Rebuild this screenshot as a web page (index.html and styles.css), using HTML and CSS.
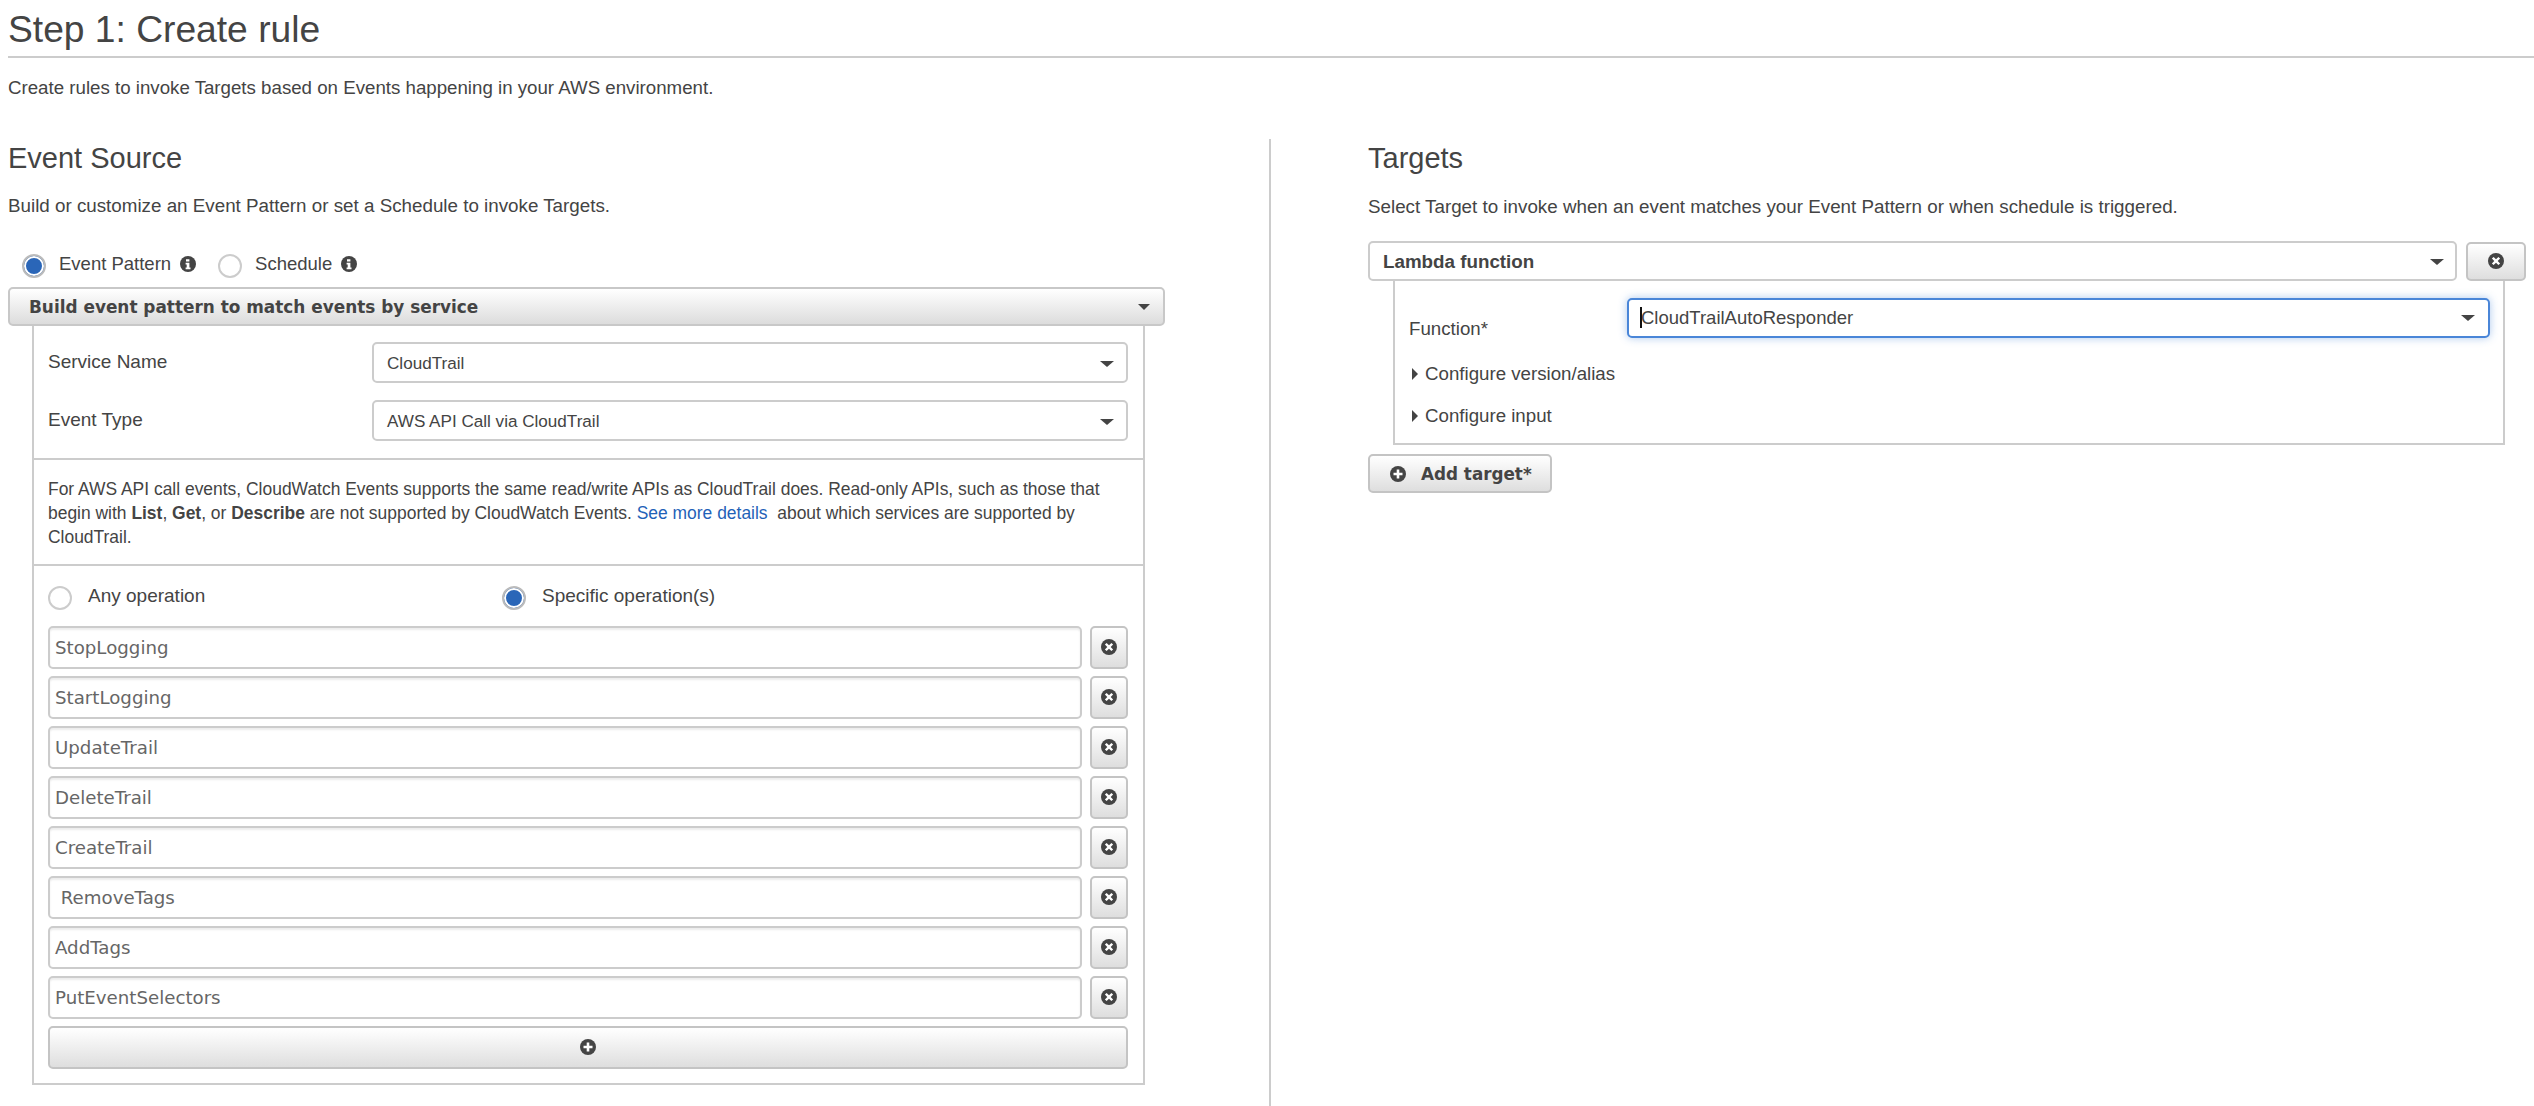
FILE: index.html
```html
<!DOCTYPE html>
<html lang="en">
<head>
    <meta charset="UTF-8">
    <title>Step 1: Create rule</title>
    <link rel="stylesheet" href="styles.css">
</head>
<body>
<svg class="icon-defs" width="0" height="0">
    <symbol id="i-info" viewBox="0 0 16 16">
        <circle cx="8" cy="8" r="8" fill="#444"/>
        <path d="M6 3.2h3.4v2.4H6zM5.6 6.7h3.8v4.9h1.1v1.7H5.6v-1.7h1.1V8.4H5.6z" fill="#fff"/>
    </symbol>
    <symbol id="i-close" viewBox="0 0 16 16">
        <circle cx="8" cy="8" r="8" fill="#444"/>
        <path d="M5.6 3.9L8 6.3l2.4-2.4 1.7 1.7L9.7 8l2.4 2.4-1.7 1.7L8 9.7l-2.4 2.4-1.7-1.7L6.3 8 3.9 5.6z" fill="#fff"/>
    </symbol>
    <symbol id="i-plus" viewBox="0 0 16 16">
        <circle cx="8" cy="8" r="8" fill="#444"/>
        <path d="M6.7 3.5h2.6v3.2h3.2v2.6H9.3v3.2H6.7V9.3H3.5V6.7h3.2z" fill="#fff"/>
    </symbol>
</svg>

<header class="page-head">
    <h1>Step 1: Create rule</h1>
</header>
<p class="intro">Create rules to invoke Targets based on Events happening in your AWS environment.</p>

<main class="columns">
    <section class="col-source">
        <h2>Event Source</h2>
        <p class="lead">Build or customize an Event Pattern or set a Schedule to invoke Targets.</p>

        <div class="mode-row">
            <span class="radio on"></span>
            <span class="mode-label">Event Pattern</span>
            <svg class="icon-info"><use href="#i-info"/></svg>
            <span class="radio second"></span>
            <span class="mode-label">Schedule</span>
            <svg class="icon-info"><use href="#i-info"/></svg>
        </div>

        <div class="bar-select">
            <span>Build event pattern to match events by service</span>
            <i class="caret"></i>
        </div>

        <div class="pattern-panel">
            <div class="service-fields">
                <div class="field-row">
                    <label>Service Name</label>
                    <div class="select"><span>CloudTrail</span><i class="caret"></i></div>
                </div>
                <div class="field-row">
                    <label>Event Type</label>
                    <div class="select"><span>AWS API Call via CloudTrail</span><i class="caret"></i></div>
                </div>
            </div>

            <div class="note">
                For AWS API call events, CloudWatch Events supports the same read/write APIs as CloudTrail does. Read-only APIs, such as those that<br>
                begin with <b>List</b>, <b>Get</b>, or <b>Describe</b> are not supported by CloudWatch Events. <a href="#">See more details</a>&nbsp; about which services are supported by<br>
                CloudTrail.
            </div>

            <div class="operations">
                <div class="op-choice">
                    <div class="op-item"><span class="radio"></span><span>Any operation</span></div>
                    <div class="op-item"><span class="radio on"></span><span>Specific operation(s)</span></div>
                </div>
                <div class="op-row"><div class="op-input">StopLogging</div><button class="icon-btn"><svg class="icon-16"><use href="#i-close"/></svg></button></div>
                <div class="op-row"><div class="op-input">StartLogging</div><button class="icon-btn"><svg class="icon-16"><use href="#i-close"/></svg></button></div>
                <div class="op-row"><div class="op-input">UpdateTrail</div><button class="icon-btn"><svg class="icon-16"><use href="#i-close"/></svg></button></div>
                <div class="op-row"><div class="op-input">DeleteTrail</div><button class="icon-btn"><svg class="icon-16"><use href="#i-close"/></svg></button></div>
                <div class="op-row"><div class="op-input">CreateTrail</div><button class="icon-btn"><svg class="icon-16"><use href="#i-close"/></svg></button></div>
                <div class="op-row"><div class="op-input">&nbsp;RemoveTags</div><button class="icon-btn"><svg class="icon-16"><use href="#i-close"/></svg></button></div>
                <div class="op-row"><div class="op-input">AddTags</div><button class="icon-btn"><svg class="icon-16"><use href="#i-close"/></svg></button></div>
                <div class="op-row"><div class="op-input">PutEventSelectors</div><button class="icon-btn"><svg class="icon-16"><use href="#i-close"/></svg></button></div>
                <button class="add-op"><svg class="icon-16"><use href="#i-plus"/></svg></button>
            </div>
        </div>
    </section>

    <section class="col-targets">
        <h2>Targets</h2>
        <p class="lead">Select Target to invoke when an event matches your Event Pattern or when schedule is triggered.</p>

        <div class="target-head">
            <div class="select target-select"><b>Lambda function</b><i class="caret"></i></div>
            <button class="icon-btn target-remove"><svg class="icon-16"><use href="#i-close"/></svg></button>
        </div>

        <div class="target-panel">
            <div class="function-row">
                <label>Function*</label>
                <div class="select focused"><span class="text-caret"></span><span>CloudTrailAutoResponder</span><i class="caret"></i></div>
            </div>
            <div class="expander first"><i class="caret-right"></i>Configure version/alias</div>
            <div class="expander"><i class="caret-right"></i>Configure input</div>
        </div>

        <button class="add-target"><svg class="icon-16"><use href="#i-plus"/></svg><span>Add target*</span></button>
    </section>
</main>
</body>
</html>
```

FILE: styles.css
```css
* {
    box-sizing: border-box;
}

html, body {
    height: 100%;
}

body {
    margin: 0;
    padding: 0 8px;
    font-family: "Liberation Sans", Arial, sans-serif;
    font-size: 18.7px;
    color: #444;
    background: #fff;
    overflow: hidden;
}

.icon-defs {
    position: absolute;
}

.page-head {
    height: 58px;
    margin-right: -8px;
    border-bottom: 2px solid #ccc;
}

h1 {
    margin: 0;
    padding-top: 8px;
    font-size: 37.2px;
    font-weight: 400;
    line-height: 42px;
}

.intro {
    margin: 0;
    padding-top: 18px;
    line-height: 24px;
}

.columns {
    display: flex;
    margin-top: 39px;
}

h2 {
    margin: 0;
    font-size: 29px;
    font-weight: 400;
    line-height: 34px;
}

.lead {
    margin: 0;
    padding-top: 19px;
    font-size: 18.8px;
    line-height: 24px;
}

.col-source {
    width: 1261px;
    flex: none;
    padding-top: 2px;
}

.col-targets {
    flex: 1;
    padding: 2px 9px 0 97px;
    border-left: 2px solid #ccc;
    height: 1000px;
}

.col-targets .lead {
    padding-top: 20px;
}

.mode-row {
    display: flex;
    align-items: center;
    height: 24px;
    margin-top: 36px;
    padding-left: 14px;
    font-size: 18.5px;
}

.radio {
    display: inline-block;
    flex: none;
    width: 24px;
    height: 24px;
    border: 2px solid #ccc;
    border-radius: 50%;
    background: #fff;
}

.radio.on {
    border-color: #bbb;
    box-shadow: inset 0 0 0 2px #fff;
    background: #2a66b8;
}

.mode-label {
    margin-left: 13px;
    margin-top: -4px;
}

.icon-info {
    width: 16px;
    height: 16px;
    margin-left: 9px;
    margin-top: -4px;
}

.radio.second {
    margin-left: 22px;
}

.caret {
    width: 0;
    height: 0;
    flex: none;
    border-left: 7px solid transparent;
    border-right: 7px solid transparent;
    border-top: 6px solid #444;
}

.bar-select {
    display: flex;
    align-items: center;
    justify-content: space-between;
    width: 1157px;
    height: 39px;
    margin-top: 9px;
    padding: 0 13px 0 19px;
    font-family: "DejaVu Sans", Verdana, sans-serif;
    font-size: 16.9px;
    font-weight: 700;
    border: 2px solid #c8c8c8;
    border-radius: 5px;
    background: linear-gradient(#fff, #dcdcdc);
}

.bar-select .caret {
    border-left-width: 6px;
    border-right-width: 6px;
}

.pattern-panel {
    width: 1113px;
    margin-left: 24px;
    border: 2px solid #ccc;
    border-top: 0;
}

.service-fields {
    height: 134px;
    padding: 16px 15px 0 14px;
    border-bottom: 2px solid #ccc;
    font-size: 19px;
}

.field-row {
    display: flex;
    height: 41px;
    margin-bottom: 17px;
}

.field-row label {
    width: 324px;
    flex: none;
    line-height: 39px;
}

.select {
    display: flex;
    align-items: center;
    justify-content: space-between;
    flex: 1;
    padding: 2px 12px 0 13px;
    font-size: 17.1px;
    border: 2px solid #ccc;
    border-radius: 5px;
    background: #fff;
}

.note {
    height: 106px;
    padding: 17px 14px 0;
    font-size: 17.45px;
    line-height: 24px;
    border-bottom: 2px solid #ccc;
}

.note a {
    color: #1f62b8;
    text-decoration: none;
}

.operations {
    padding: 20px 15px 14px 14px;
    font-size: 19px;
}

.op-choice {
    display: flex;
    height: 40px;
}

.op-item {
    display: flex;
    gap: 16px;
    width: 454px;
}

.op-item span:last-child {
    margin-top: -2px;
    line-height: 24px;
}

.op-row {
    display: flex;
    gap: 8px;
    height: 43px;
    margin-bottom: 7px;
}

.op-input {
    flex: 1;
    padding-left: 5px;
    font-family: "DejaVu Sans", Verdana, sans-serif;
    font-size: 18.2px;
    line-height: 39px;
    color: #666;
    border: 2px solid #ccc;
    border-radius: 5px;
    background: #fff;
    box-shadow: inset 0 2px 2px rgba(0, 0, 0, 0.08);
}

button {
    padding: 0;
    border: 2px solid #c4c4c4;
    border-radius: 5px;
    background: linear-gradient(#fff, #dedede);
    color: #444;
}

.icon-btn {
    display: flex;
    align-items: center;
    justify-content: center;
    width: 38px;
    flex: none;
    padding-bottom: 2px;
}

.icon-16 {
    display: block;
    width: 16px;
    height: 16px;
    flex: none;
}

.add-op {
    display: flex;
    align-items: center;
    justify-content: center;
    width: 100%;
    height: 43px;
    padding-bottom: 2px;
}

.target-head {
    display: flex;
    height: 40px;
    margin-top: 22px;
}

.target-select {
    flex: none;
    width: 1089px;
    padding-right: 11px;
}

.target-select b {
    font-size: 18.8px;
}

.target-remove {
    width: 60px;
    height: 39px;
    margin-top: 1px;
    margin-left: 9px;
}

.target-panel {
    height: 164px;
    width: 1112px;
    margin-left: 25px;
    padding: 17px 13px 0 14px;
    border: 2px solid #ccc;
    border-top: 0;
}

.function-row {
    display: flex;
    height: 40px;
}

.function-row label {
    width: 218px;
    flex: none;
    padding-top: 19px;
    line-height: 24px;
}

.select.focused {
    position: relative;
    padding: 0 13px 0 12px;
    font-size: 18.5px;
    border-color: #4a86d8;
    box-shadow: 0 0 8px rgba(74, 134, 216, 0.45);
}

.select.focused span:last-of-type {
    margin-right: auto;
}

.text-caret {
    position: absolute;
    left: 11px;
    top: 7px;
    width: 2px;
    height: 21px;
    background: #111;
}

.expander {
    height: 42px;
    line-height: 24px;
}

.expander.first {
    margin-top: 24px;
}

.caret-right {
    display: inline-block;
    width: 0;
    height: 0;
    margin-right: 7px;
    margin-left: 3px;
    border-top: 6px solid transparent;
    border-bottom: 6px solid transparent;
    border-left: 6px solid #444;
}

.add-target {
    display: flex;
    align-items: center;
    gap: 15px;
    width: 184px;
    height: 39px;
    margin-top: 9px;
    padding: 0 0 0 20px;
    font-family: "DejaVu Sans", Verdana, sans-serif;
    font-size: 16.8px;
    font-weight: 700;
}
```
